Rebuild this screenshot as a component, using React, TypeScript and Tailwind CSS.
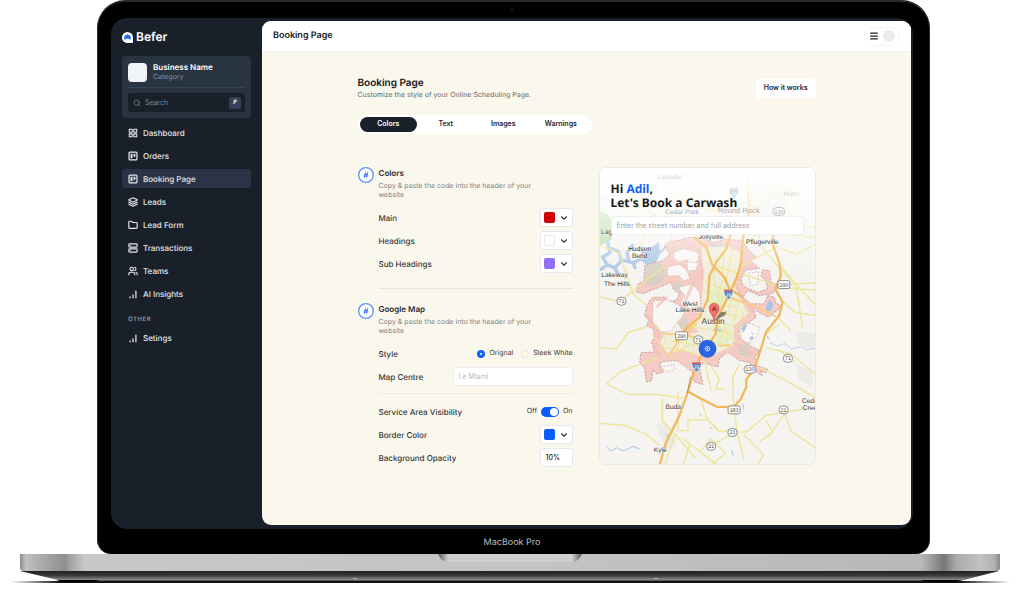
import { useState, type ReactNode } from "react";
import { ChevronDown, Folder, Layers, Menu, Search, Server, Users } from "lucide-react";

type IconProps = { className?: string; strokeWidth?: number };

function BarsIcon({ className }: IconProps) {
  return (
    <svg viewBox="0 0 24 24" className={className} fill="none" stroke="currentColor" strokeWidth="3" strokeLinecap="round" aria-hidden="true">
      <path d="M5 21v-2M12 21v-7M19 21V5" />
    </svg>
  );
}

function GridIcon({ className }: IconProps) {
  return (
    <svg viewBox="0 0 24 24" className={className} fill="none" stroke="currentColor" strokeWidth="2.600" strokeLinejoin="round" aria-hidden="true">
      <path d="M3 3h7v7H3ZM14 3h7v7h-7ZM3 14h7v7H3ZM14 14h7v7h-7Z" />
    </svg>
  );
}

function BoardIcon({ className }: IconProps) {
  return (
    <svg viewBox="0 0 24 24" className={className} fill="none" stroke="currentColor" aria-hidden="true">
      <rect x="2.500" y="2.500" width="19" height="19" rx="2.500" strokeWidth="3" />
      <path d="M8.500 6.500v11M15.500 6.500v7" strokeWidth="4.500" />
    </svg>
  );
}

function Logo() {
  return (
    <svg viewBox="0 0 33 33" className="size-[11px]" aria-hidden="true">
      <path d="M16.500 0A16.500 16.500 0 0 0 0 16.500C0 26 7 33 16.500 33H30a3 3 0 0 0 3-3V16.500A16.500 16.500 0 0 0 16.500 0Z" fill="#fff" />
      <path d="m16.500 6 2.600 3.600 4.200-1.200.2 4.400 4.200 1.500-2.400 3.700 2.400 3.600-4.700.9-2.500-2.500-4 .5-4-.5-2.500 2.500-4.700-.9 2.400-3.600L5.300 14.300l4.200-1.500.2-4.400 4.200 1.200Z" fill="#2468ef" />
    </svg>
  );
}

const navItems = [
  { label: "Dashboard", icon: GridIcon },
  { label: "Orders", icon: BoardIcon },
  { label: "Booking Page", icon: BoardIcon, active: true },
  { label: "Leads", icon: Layers },
  { label: "Lead Form", icon: Folder },
  { label: "Transactions", icon: Server },
  { label: "Teams", icon: Users },
  { label: "AI Insights", icon: BarsIcon },
];

function NavLink({ label, icon: Icon, active }: { label: string; icon: React.ComponentType<IconProps>; active?: boolean }) {
  return (
    <a
      href="#"
      aria-current={active ? "page" : undefined}
      className={`flex h-[19px] items-center gap-[5px] rounded-[3px] px-1.5 text-[8px] font-medium text-[#e4e7eb] ${active ? "bg-[#2b3446]" : ""}`}
    >
      <Icon className="size-2.5" strokeWidth={2.8} />
      {label}
    </a>
  );
}

function Sidebar() {
  return (
    <aside className="flex w-[151px] shrink-0 flex-col px-[11px] pt-3">
      <div className="flex h-[14px] items-center gap-[3px] text-[12px] font-semibold text-white">
        <Logo />
        Befer
      </div>
      <div className="mt-3 rounded-[4px] bg-[#283441] px-1.5 pt-1.5 pb-1.5">
        <div className="flex items-center gap-1.5">
          <div className="size-[19px] rounded-[4px] bg-[#f0f3f8]" />
          <div>
            <p className="text-[8px] leading-[10px] font-semibold text-white">Business Name</p>
            <p className="text-[7px] leading-[10px] text-[#8290a0]">Category</p>
          </div>
        </div>
        <hr className="mt-[5px] border-[#364352]" />
        <div className="mt-[5px] flex h-[19px] items-center gap-1 rounded-[3px] bg-[#1a2029] pr-1 pl-[5px]">
          <Search className="size-[8px] text-[#8b95a3]" />
          <input aria-label="Search" placeholder="Search" className="h-full min-w-0 flex-1 bg-transparent text-[7px] text-white outline-none placeholder:text-[#7d8896]" />
          <kbd className="flex size-3 items-center justify-center rounded-[2px] bg-[#33425a] font-[Inter] text-[6px] font-bold text-white italic">F</kbd>
        </div>
      </div>
      <nav aria-label="Main" className="mt-[5px] flex flex-col gap-1">
        {navItems.map((item) => (
          <NavLink key={item.label} {...item} />
        ))}
        <p className="mt-[9px] px-1.5 text-[6px] leading-2 font-medium tracking-widest text-[#a4abb5]">OTHER</p>
        <NavLink label="Setings" icon={BarsIcon} />
      </nav>
    </aside>
  );
}

function Section({ title, children }: { title: string; children: ReactNode }) {
  return (
    <section className="flex items-start gap-[5px]">
      <svg viewBox="0 0 48 48" className="size-4 shrink-0" fill="none" aria-hidden="true">
        <circle cx="24" cy="24" r="22" fill="#fff" stroke="#5b93fb" strokeWidth="4" />
        <path d="m22.500 17-3 14M28.500 17l-3 14M19 22h11M18 27h11" stroke="#2468ef" strokeWidth="2.500" strokeLinecap="round" />
      </svg>
      <div className="min-w-0 flex-1">
        <h2 className="text-[8px] leading-3 font-semibold text-[#2b2e32]">{title}</h2>
        <p className="mt-0.5 max-w-40 text-[7px] leading-[9px] text-[#7f8286]">Copy &amp; paste the code into the header of your website</p>
        <div className="mt-[9px] flex flex-col gap-1">{children}</div>
      </div>
    </section>
  );
}

function Row({ label, htmlFor, children }: { label: string; htmlFor?: string; children: ReactNode }) {
  return (
    <div className="flex h-[19px] items-center justify-between">
      <label htmlFor={htmlFor} className="text-[8px] font-medium text-[#36393d]">
        {label}
      </label>
      {children}
    </div>
  );
}

function ColorPicker({ id, swatch }: { id: string; swatch: string }) {
  return (
    <button id={id} type="button" aria-haspopup="listbox" className="flex h-[19px] w-[33px] items-center justify-between rounded-[3px] border border-[#e6e8ec] bg-white px-[3px]">
      <span className={`size-[11px] rounded-[2px] ${swatch}`} />
      <ChevronDown className="size-2.5 text-[#333]" strokeWidth={2.6} />
    </button>
  );
}

const shields = [
  { x: 539, y: 131, t: "130", round: true },
  { x: 554, y: 351, t: "290", round: false },
  { x: 65, y: 401, t: "71", round: true },
  { x: 246, y: 505, t: "290", round: false },
  { x: 296, y: 517, t: "71", round: true },
  { x: 566, y: 573, t: "71", round: true },
  { x: 452, y: 606, t: "130", round: true },
  { x: 404, y: 728, t: "183", round: false },
  { x: 553, y: 728, t: "21", round: true },
  { x: 399, y: 796, t: "21", round: true },
  { x: 335, y: 838, t: "21", round: true },
];

const places = [
  { x: 211, y: 34, t: "Leander", s: 20, c: "#777" },
  { x: 577, y: 85, t: "Hutto", s: 20, c: "#777" },
  { x: 247, y: 138, t: "Cedar Park", s: 20, c: "#666" },
  { x: 418, y: 136, t: "Round Rock", s: 23, c: "#666" },
  { x: 20, y: 199, t: "Lag", s: 20, c: "#444" },
  { x: 334, y: 215, t: "Jollyville", s: 20, c: "#444" },
  { x: 489, y: 229, t: "Pflugerville", s: 20, c: "#333" },
  { x: 120, y: 250, t: "Hudson", s: 20, c: "#333" },
  { x: 120, y: 270, t: "Bend", s: 20, c: "#333" },
  { x: 44, y: 328, t: "Lakeway", s: 20, c: "#333" },
  { x: 51, y: 356, t: "The Hills", s: 20, c: "#333" },
  { x: 272, y: 414, t: "West", s: 20, c: "#333" },
  { x: 271, y: 434, t: "Lake Hills", s: 20, c: "#333" },
  { x: 341, y: 469, t: "Austin", s: 25, c: "#333" },
  { x: 221, y: 725, t: "Buda", s: 20, c: "#333" },
  { x: 182, y: 854, t: "Kyle", s: 20, c: "#333" },
  { x: 632, y: 708, t: "Ceda", s: 20, c: "#333" },
  { x: 632, y: 729, t: "Cree", s: 20, c: "#333" },
];

function CityMap() {
  return (
    <svg viewBox="0 0 648 891" preserveAspectRatio="xMidYMid slice" className="absolute inset-0 size-full" role="img" aria-label="Map of Austin">
      <defs>
        <linearGradient id="fade" x1="0" y1="0" x2="0" y2="1">
          <stop offset="0" stopColor="#fff" />
          <stop offset="0.35" stopColor="#fff" stopOpacity="0.72" />
          <stop offset="1" stopColor="#fff" stopOpacity="0" />
        </linearGradient>
      </defs>
      <rect width="648" height="891" fill="#f5f4f1" />
      <path d="M0 130 25 140 45 180 35 215 0 235Z" fill="#b9dba8" />
      <path d="M470 0 560 30 550 130 480 190 430 150ZM590 490l58 10v50l-50-20ZM165 770l45 5 20 60-30 10ZM590 590l50 20v50l-40-20Z" fill="#ecebe5" />
      <g fill="none" stroke="#a9c5e6" strokeLinejoin="round" strokeLinecap="round">
        <path d="m3 305 20-14 22 10 22-24 34 8 22-12 18 12 20-14M22 290l-14-22 22-12-6-32M66 278l-10-26-22-10M88 282l-6-28 16-22M44 300l10 18M100 284l6 16" strokeWidth="10" />
        <path d="m128 240 26 2 22-16 4 30-16 34-22 2-18-22Z" fill="#a9c5e6" strokeWidth="4" />
        <path d="M180 256 200 236M172 290l10 14" strokeWidth="5" />
      </g>

      <g transform="translate(0 174)">
        <path
          d="M195 60 210 47 240 44 260 36 300 35 345 50 375 40 430 45 445 70 470 95 452 105 480 128 440 132 425 160 430 180 450 190 475 200 505 190 500 165 485 152 490 132 512 136 512 150 515 170 540 180 530 196 515 205 480 210 445 195 430 215 455 235 495 235 505 210 525 215 530 232 545 240 535 255 522 262 510 275 480 262 462 250 470 275 450 290 420 305 418 330 440 355 480 375 466 396 470 420 505 432 500 442 485 436 488 452 460 430 452 412 420 405 385 380 360 400 355 425 330 418 315 410 300 425 310 478 285 470 278 440 256 422 230 405 185 410 180 425 192 440 170 446 160 432 156 466 140 470 135 430 120 410 124 382 165 380 155 350 165 335 160 310 140 300 148 285 135 270 140 246 150 225 160 215 200 215 195 230 230 225 240 205 220 190 215 170 190 180 165 190 130 204 110 200 115 175 132 166 135 120 160 112 190 105 210 85Z"
          fill="#f5cbc3"
          stroke="#b8949b"
          strokeWidth="2.500"
          strokeDasharray="7 4"
          strokeLinejoin="round"
        />
        <path d="M138 122 180 110 196 130 192 165 160 185 140 175ZM222 170l24 0-2 34-20-14ZM232 290l26-16 10 22-22 18ZM330 55l40 0 10 30-40 15ZM415 360l38-12-4 50-34-14Z" fill="#d9d0c5" />
        <path d="M305 65 385 62 425 80 418 130 402 168 430 235 448 262 405 300 402 338 412 352 390 365 350 385 300 392 250 372 205 382 182 352 198 318 250 332 300 318 268 296 305 262 312 160Z" fill="#f1eedb" />
        <path d="M340 300h50l10 40-40 20ZM330 190l40-10 10 50-50 10Z" fill="#e6efcb" />
        <path d="M185 250l30 10 40 70-50-5-28-30Z" fill="#f4f2ea" />
        <g fill="#f8f7f4" stroke="#c8a5a4" strokeWidth="2" strokeDasharray="6 4">
          <path d="m222 80 28-12 28 8 22 6-4 24-22 12-12-16-24 8-18-14Z" />
          <path d="m262 108 36 4-10 22-24 2ZM204 124l36-8 22 18 10 26-20 6-14-16-36 2ZM236 186l42-12 22 26 4 40-26 16-26-4-10-20 14-22Z" />
          <path d="m160 226 42-4 38 18 14 26-22 26-18 26-30 2-26-26Z" />
          <path d="m424 312 28-18 28 10-6 26-28 24-22-14ZM182 426l40-8 4 14-20 8ZM448 142l30-4-2 38-24 4Z" />
        </g>
        <g fill="none" stroke="#f2bdb6" strokeWidth="9" opacity="0.65">
          <path d="M300 70c-8 40 20 60 4 90M282 170l-30 70 30 20M140 270l40 50-16 50 20 24M404 170l26 50 34 36M400 350l60 40M200 215l-30 30" />
        </g>
        <path d="m500 240 12-16 10 12-6 20-14 2ZM426 310l10-14 6 6-10 20ZM344 308l22 4-2 8-24-4ZM450 336l10-4 2 8-10 4Z" fill="#aac2e4" />
        <path d="m512 352 24 10 20-8 20 16 30-6 18 10 24-6" fill="none" stroke="#b4cbe8" strokeWidth="2.500" />
      </g>

      <g fill="none" stroke="#ebe79c" strokeWidth="4.500" strokeLinejoin="round">
        <path d="M0 388 60 402 130 345 190 300M0 540 50 545 85 495 140 478M0 232l60 26 40 120 40 36M20 650l40-36 110-42M20 650l65 32h90l75 12M0 768l80 8 60 26 40 34M188 694v68l40 40 60 72M235 675v115h30v-32h60l30 34h30M400 795l40 0 60-50 148-25M335 838l40-26 24-16M303 694l20 62 32 30M420 590l-20 40 2 90M404 728l10 70 20 80M315 580l20 90M335 595l24 40-10 30 28 0M480 600l80 40 88 50M500 540l76 20 72 60M548 555l40 30M433 802l60 62-16 27M500 760l20 34-40 30M556 740l20 52 72 50M556 740l-50 70M226 802l-30 89M250 815l100 76M270 832l-18 59M300 856l34-40 44 42-40 33" />
        <path d="M60 0 95 80 160 140 270 170M0 90l110 40M160 0l70 90 100 40 120-30 198-50M300 60l80 130M510 0l30 60 40 100 68 20M440 130l70-30 80-100M430 230l60-40 158 20M470 170l20 70 50 60 108 110M540 240l50 20 58-30M560 350l88-4M425 296l110-60M432 320l120 40 96 8M540 290l50 60 20 130M548 400l40 34 60 10M535 450l40 40M500 500l40-30" />
        <path d="M280 40l-10 60-50 70-10 70M210 40l120 70M110 260l40-80" opacity="0.6" />
      </g>
      <g fill="none" stroke="#ece696" strokeWidth="3" strokeLinejoin="round">
        <path d="M312 340l80 34M316 370l90 30M320 400l90 20M330 430l100 20M300 450l120 30M290 480l130 20M350 260l-8 70 20 80M374 250l-6 90-18 80M400 240l-20 100-20 90M406 350l-20 90M420 390l-20 90M440 410l-20 80M350 470l66 60M210 520l100 16M200 540l100 20M220 556l90-40M240 530l-20 50M264 510l-14 60M290 500l-14 70M330 520l60 14M330 550l40-50M168 470l30 44-16 40M156 500l50 60M380 480l6 90M360 300l60 18M340 290l90 34" />
      </g>
      <g fill="none" stroke="#f6cf86" strokeWidth="6" strokeLinejoin="round">
        <path d="M195 500h60l50 20M205 568l30-44 56-56M354 534l42 0M390 389l80 28 60 30M300 449l-60 60" />
      </g>
      <g fill="none" stroke="#f2b95c" strokeWidth="7" strokeLinejoin="round" strokeLinecap="round">
        <path d="M181 891 198 829 238 749 263 679 278 629 300 574 348 500 355 450 385 389 412 330 425 284 430 214 450 130 440 0" />
        <path d="M230 520 262 480 300 449 325 394 330 324 350 284 380 244 392 205 410 150" />
        <path d="M285 209 320 239 338 290 375 329 390 364 430 389" />
        <path d="M520 160 522 234 540 284 545 324 528 364 550 404 540 444 500 494 485 544 465 604 440 638 441 659 424 696 403 719 353 719 303 694 268 674" />
      </g>
      <path d="m263 679 10-50" stroke="#8a8064" strokeWidth="2" />
      <g fill="none" stroke="#a9c5e6" strokeWidth="3">
        <path d="m300 738 6 10M330 778l8 8M200 800l4 12M395 848l8 20M430 710l4 18M20 840l14 12 16-10 20 10 30-14 20 8M456 494l6 8M504 505l4 12" />
      </g>

      <rect width="648" height="330" fill="url(#fade)" />

      <g fontFamily="'Liberation Sans', Arial, sans-serif" textAnchor="middle">
        {places.map((p) => (
          <text key={p.t} x={p.x} y={p.y} fontSize={p.s} fill={p.c} opacity={p.y < 100 ? 0.3 : p.y < 150 ? 0.55 : 1} stroke="#fff" strokeWidth="3" strokeOpacity="0.7" paintOrder="stroke">
            {p.t}
          </text>
        ))}
        {shields.map((s) => (
          <g key={`${s.x}-${s.y}`} opacity={s.y < 140 ? 0.5 : 1}>
            <rect
              x={s.x - (s.t.length > 2 ? 18 : 14)}
              y={s.y - 12}
              width={s.t.length > 2 ? 36 : 28}
              height="24"
              rx={s.round ? 12 : 5}
              fill="#fff"
              stroke="#77787a"
              strokeWidth="2.500"
            />
            <text x={s.x} y={s.y + 6} fontSize="16" fill="#444">
              {s.t}
            </text>
          </g>
        ))}
        {[
          { x: 403, y: 76, o: 0.25 },
          { x: 387, y: 380, o: 1 },
          { x: 291, y: 598, o: 1 },
        ].map((m) => (
          <g key={m.y} opacity={m.o} transform={`translate(${m.x} ${m.y})`}>
            <path d="M-13-14h26q4 17-13 30-17-13-13-30Z" fill="#4b84c4" stroke="#fff" strokeWidth="2" />
            <path d="M-13-14h26v6h-26Z" fill="#dc6b62" />
            <text y="8" fontSize="15" fill="#fff">35</text>
          </g>
        ))}
        <path d="m344 458 20-24 18-2-6 12Z" fill="#55584c" opacity="0.7" />
        <path d="M344 460c-2-18-15-22-15-38a15 15 0 0 1 30 0c0 16-13 20-15 38Z" fill="#f2706a" stroke="#b2423e" strokeWidth="1.500" />
        <text x="344" y="430" fontSize="20" fill="#3c1514">A</text>
      </g>
      <circle cx="324" cy="544" r="27" fill="#2b63e3" />
      <circle cx="324" cy="544" r="7" fill="none" stroke="#dbe7ff" strokeWidth="2.500" />
      <path d="M317 544h14M324 537v14" stroke="#dbe7ff" strokeWidth="2" />
    </svg>
  );
}

function Preview() {
  return (
    <div className="relative h-[298px] min-w-0 flex-1 overflow-hidden rounded-[7px] border border-[#eceae0]">
      <CityMap />
      <div className="relative px-[11px] pt-3.5">
        <p className="font-['Noto_Sans',sans-serif] text-[12px] leading-[14px] font-bold text-[#17191c]">
          Hi <span className="text-[#1560fb]">Adil</span>,
          <br />
          Let's Book a Carwash
        </p>
        <input
          aria-label="Address"
          placeholder="Enter the street number and full address"
          className="mt-1.5 h-[19px] w-full rounded-[3px] border border-[#eeeff1] bg-white px-[5px] text-[7px] outline-none placeholder:text-[#9a9da3]"
        />
      </div>
    </div>
  );
}

const tabs = ["Colors", "Text", "Images", "Warnings"];

function BookingPage() {
  const [tab, setTab] = useState("Colors");
  return (
    <main className="mt-[3px] mr-0.5 mb-1 flex min-w-0 flex-1 flex-col overflow-hidden rounded-[9px] bg-[#faf7ec]">
      <header className="flex h-[31px] items-center justify-between border-b border-[#f2f1ec] bg-white pr-[11px] pl-[11px]">
        <p className="text-[9px] font-semibold text-[#1b1d20]">Booking Page</p>
        <div className="flex h-[19px] items-center gap-1 rounded-full border border-[#f4f4f4] px-1">
          <button type="button" aria-label="Menu">
            <Menu className="size-[10px] text-[#222]" strokeWidth={3} />
          </button>
          <span className="size-3 rounded-full bg-[#ebebeb]" />
        </div>
      </header>
      <div className="mx-auto w-full max-w-[458px] pt-6 pb-[58px]">
        <div className="flex items-center justify-between">
          <div>
            <h1 className="text-[10px] leading-[14px] font-semibold text-[#141619]">Booking Page</h1>
            <p className="text-[7px] leading-[10px] text-[#66686b]">Customize the style of your Online Scheduling Page.</p>
          </div>
          <button type="button" className="h-[19px] rounded-[3px] bg-white px-2 text-[7px] font-semibold text-[#26282b]">
            How it works
          </button>
        </div>
        <div role="tablist" className="mt-[15px] grid h-[19px] w-[234px] grid-cols-4 rounded-full bg-white p-0.5">
          {tabs.map((t) => (
            <button
              key={t}
              type="button"
              role="tab"
              aria-selected={t === tab}
              onClick={() => setTab(t)}
              className={`rounded-full text-[7px] font-semibold ${t === tab ? "bg-[#1a2029] text-white" : "text-[#26282b]"}`}
            >
              {t}
            </button>
          ))}
        </div>
        <div className="mt-[33px] flex items-start gap-[26px]">
          <form className="min-w-0 flex-1">
            <Section title="Colors">
              <Row label="Main" htmlFor="main">
                <ColorPicker id="main" swatch="bg-[#d10000]" />
              </Row>
              <Row label="Headings" htmlFor="headings">
                <ColorPicker id="headings" swatch="border border-[#e8e8e8] bg-white" />
              </Row>
              <Row label="Sub Headings" htmlFor="sub-headings">
                <ColorPicker id="sub-headings" swatch="bg-[#9270fb]" />
              </Row>
            </Section>
            <hr className="mt-[15px] mb-[14px] ml-[21px] border-[#e8e6dc]" />
            <Section title="Google Map">
              <div className="flex h-[19px] items-center justify-between" role="radiogroup" aria-labelledby="style-label">
                <span id="style-label" className="text-[8px] font-medium text-[#36393d]">Style</span>
                <div className="flex items-center gap-2 text-[7px] text-[#36393d]">
                  <label className="flex items-center gap-1">
                    <input type="radio" name="style" defaultChecked className="size-2 appearance-none rounded-full border border-[#e6e4dc] checked:border-[3px] checked:border-[#0f62fe] checked:bg-white" />
                    Orignal
                  </label>
                  <label className="flex items-center gap-1">
                    <input type="radio" name="style" className="size-2 appearance-none rounded-full border border-[#e6e4dc] checked:border-[3px] checked:border-[#0f62fe] checked:bg-white" />
                    Sleek White
                  </label>
                </div>
              </div>
              <Row label="Map Centre" htmlFor="centre">
                <input id="centre" placeholder="I.e Miami" className="h-[19px] w-[120px] rounded-[3px] border border-[#eceef1] bg-white px-[5px] text-[7px] outline-none placeholder:text-[#b9bcc4]" />
              </Row>
              <hr className="mt-[3px] mb-1 border-[#eeece2]" />
              <Row label="Service Area Visibility" htmlFor="visibility">
                <span className="flex items-center gap-1 text-[7px] text-[#36393d]">
                  Off
                  <input
                    id="visibility"
                    type="checkbox"
                    role="switch"
                    defaultChecked
                    className="flex h-2.5 w-[18px] appearance-none items-center rounded-full bg-[#c9ccd2] p-px before:size-2 before:rounded-full before:bg-white checked:justify-end checked:bg-[#0a5cff]"
                  />
                  On
                </span>
              </Row>
              <Row label="Border Color" htmlFor="border-color">
                <ColorPicker id="border-color" swatch="bg-[#0a5cff]" />
              </Row>
              <Row label="Background Opacity" htmlFor="opacity">
                <input id="opacity" defaultValue="10%" className="h-[19px] w-[33px] rounded-[3px] border border-[#e6e8ec] bg-white px-[5px] text-[7px] font-medium text-[#222] outline-none" />
              </Row>
            </Section>
          </form>
          <Preview />
        </div>
      </div>
    </main>
  );
}

function LaptopBase() {
  return (
    <svg viewBox="0 0 1024 32" preserveAspectRatio="none" className="block h-8 w-full" aria-hidden="true">
      <defs>
        <linearGradient id="metal">
          <stop offset="0" stopColor="#8b8b8b" />
          <stop offset="0.006" stopColor="#c2c2c2" />
          <stop offset="0.014" stopColor="#b5b5b5" />
          <stop offset="0.046" stopColor="#8e8e8e" />
          <stop offset="0.052" stopColor="#a5a5a5" />
          <stop offset="0.066" stopColor="#c8c8c8" />
          <stop offset="0.5" stopColor="#c4c4c4" />
          <stop offset="0.92" stopColor="#b8b8b8" />
          <stop offset="0.943" stopColor="#777" />
          <stop offset="0.955" stopColor="#aaa" />
          <stop offset="0.98" stopColor="#c2c2c2" />
          <stop offset="0.994" stopColor="#b2b2b2" />
          <stop offset="1" stopColor="#888" />
        </linearGradient>
        <linearGradient id="under" x1="0" y1="0" x2="0" y2="1">
          <stop offset="0" stopColor="#202020" />
          <stop offset="0.45" stopColor="#3a3a3a" />
          <stop offset="0.85" stopColor="#858585" />
          <stop offset="1" stopColor="#444" />
        </linearGradient>
        <linearGradient id="ground">
          <stop offset="0" stopColor="#111" stopOpacity="0" />
          <stop offset="0.05" stopColor="#111" />
          <stop offset="0.95" stopColor="#111" />
          <stop offset="1" stopColor="#111" stopOpacity="0" />
        </linearGradient>
        <linearGradient id="notch">
          <stop offset="0" stopColor="#555" />
          <stop offset="0.07" stopColor="#cfcfcf" />
          <stop offset="0.93" stopColor="#cfcfcf" />
          <stop offset="1" stopColor="#555" />
        </linearGradient>
      </defs>
      <path d="M10 27h1000v2H10Z" fill="url(#ground)" />
      <path d="M20 17 62 27h898l39-10Z" fill="url(#under)" />
      <path d="M56 26h44l-10 2H64ZM920 26h42l-10 2h-22Z" fill="#000" />
      <path d="M20 0h980v15l-2 2H22l-2-2Z" fill="url(#metal)" />
      <path d="M438 0h144c-3 6-6 8-11 8H449c-5 0-8-2-11-8Z" fill="url(#notch)" />
      <path d="M353 24h4v1h-4ZM654 24h4v1h-4Z" fill="#aaa" />
    </svg>
  );
}

export default function App() {
  return (
    <div className="min-h-screen bg-white font-[Inter,sans-serif] antialiased [text-rendering:geometricPrecision]">
      <div className="mr-[94px] ml-[97px] rounded-t-[28px] rounded-b-[14px] border-x border-t-2 border-[#2a2a2a] bg-black pr-4 pl-[13px]">
        <div className="flex h-4 items-center justify-center">
          <span className="size-1 rounded-full bg-[#10141f]" />
        </div>
        <div className="flex overflow-hidden rounded-2xl bg-[#1a2029]">
          <Sidebar />
          <BookingPage />
        </div>
        <p className="pt-2 pb-[5px] text-center text-[9px] leading-3 text-[#bdbdbd]">MacBook Pro</p>
      </div>
      <LaptopBase />
    </div>
  );
}
